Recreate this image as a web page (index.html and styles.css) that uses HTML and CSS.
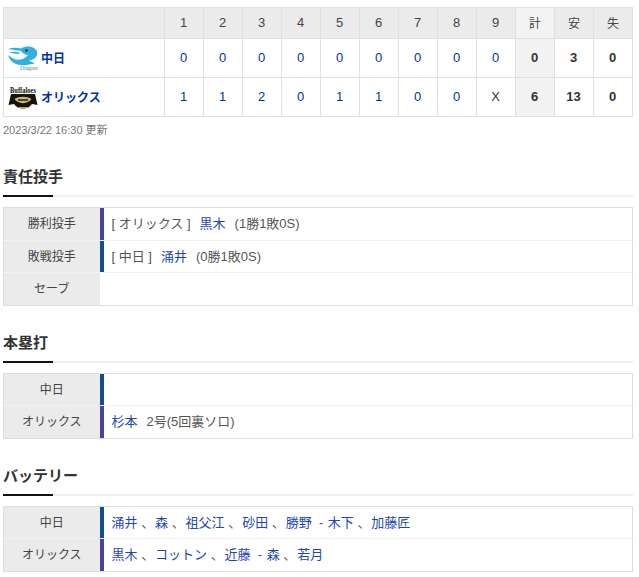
FILE: index.html
```html
<!DOCTYPE html>
<html lang="ja">
<head>
<meta charset="utf-8">
<title>試合結果</title>
<link rel="stylesheet" href="styles.css">
</head>
<body>
<table class="score">
<colgroup><col class="c-team"><col span="12" class="c-num"></colgroup>
<thead>
<tr><th></th><th>1</th><th>2</th><th>3</th><th>4</th><th>5</th><th>6</th><th>7</th><th>8</th><th>9</th><th class="total-head kanji">計</th><th class="kanji">安</th><th class="kanji">失</th></tr>
</thead>
<tbody>
<tr>
<td class="team"><div class="team-in"><svg class="logo" viewBox="0 0 30 28"><path d="M0 5C4 3.600 9 3.500 13 4.500 17 2 22 2 25 3.500 28.500 5 30 8 29 11 28 14 25 16 21 16.500L27 19.500C21 21 11 22 7 19.500 3 17.500 .5 14 .5 11 4 15 9 16.500 13 15.500 16 14.500 18 13 20 11 17 11 14 9 13 7 9 6 4 6 0 5Z" fill="#2fb2e3"/><path d="M1 8.500C5 7.500 9 7.500 12 9L11 10C7 9.500 4 9.500 1 8.500Z" fill="#2fb2e3"/><circle cx="18.500" cy="6.500" r="1.300" fill="#13242f"/><text class="logo-script" x="12" y="26">Dragons</text></svg><a href="#">中日</a></div></td>
<td><a href="#">0</a></td><td><a href="#">0</a></td><td><a href="#">0</a></td><td><a href="#">0</a></td><td><a href="#">0</a></td><td><a href="#">0</a></td><td><a href="#">0</a></td><td><a href="#">0</a></td><td><a href="#">0</a></td><td class="total">0</td><td class="plain">3</td><td class="plain">0</td>
</tr>
<tr>
<td class="team"><div class="team-in"><svg class="logo" viewBox="0 0 30 28"><path d="M3 11H27L29.500 22 24 21C20 27 10 27 6 21L.5 22Z" fill="#15130c"/><path d="M6.500 16C11 13 19 13 23.500 16 20 21.500 10 21.500 6.500 16Z" fill="#cdb777"/><path d="M10 17H20" stroke="#15130c" stroke-width="1.400"/><path d="M9 24.500H21" stroke="#b79f5e"/><text class="logo-serif" transform="translate(2 10) scale(1 1.400)">Buffaloes</text></svg><a href="#">オリックス</a></div></td>
<td><a href="#">1</a></td><td><a href="#">1</a></td><td><a href="#">2</a></td><td><a href="#">0</a></td><td><a href="#">1</a></td><td><a href="#">1</a></td><td><a href="#">0</a></td><td><a href="#">0</a></td><td class="plain">X</td><td class="total">6</td><td class="plain">13</td><td class="plain">0</td>
</tr>
</tbody>
</table>
<p class="updated">2023/3/22 16:30 更新</p>

<h2 class="heading">責任投手</h2>
<table class="info">
<tr><th>勝利投手</th><td class="bs">[ オリックス ]<a href="#">黒木</a><span class="note">(1勝1敗0S)</span></td></tr>
<tr><th>敗戦投手</th><td class="d">[ 中日 ]<a href="#">涌井</a><span class="note">(0勝1敗0S)</span></td></tr>
<tr><th>セーブ</th><td></td></tr>
</table>

<h2 class="heading">本塁打</h2>
<table class="info">
<tr><th>中日</th><td class="d"></td></tr>
<tr><th>オリックス</th><td class="bs"><a class="first" href="#">杉本</a><span class="note">2号(5回裏ソロ)</span></td></tr>
</table>

<h2 class="heading">バッテリー</h2>
<table class="info">
<tr><th>中日</th><td class="d"><a class="first" href="#">涌井</a> <span class="sep">、</span><a href="#" class="first">森</a> <span class="sep">、</span><a href="#" class="first">祖父江</a> <span class="sep">、</span><a href="#" class="first">砂田</a> <span class="sep">、</span><a href="#" class="first">勝野</a> &nbsp;<span class="sep">-</span> <a href="#" class="first">木下</a> <span class="sep">、</span><a href="#" class="first">加藤匠</a></td></tr>
<tr><th>オリックス</th><td class="bs"><a class="first" href="#">黒木</a> <span class="sep">、</span><a href="#" class="first">コットン</a> <span class="sep">、</span><a href="#" class="first">近藤</a> &nbsp;<span class="sep">-</span> <a href="#" class="first">森</a> <span class="sep">、</span><a href="#" class="first">若月</a></td></tr>
</table>
</body>
</html>
```
FILE: styles.css
```css
* { box-sizing: border-box; }
html, body { margin: 0; }
body {
  padding: 7px 6px 0 3px;
  background: #fff;
  color: #333;
  font-family: "Liberation Sans", "Noto Sans CJK JP", sans-serif;
  font-size: 12px;
}
a { color: #0033aa; text-decoration: none; }
table { border-collapse: collapse; width: 630px; table-layout: fixed; }

.score { width: 629px; border: 1px solid #ddd; }
.c-team { width: 161px; }
.c-num { width: 39px; }
.score th, .score td { border: 1px solid #e0e0e0; text-align: center; padding: 0 1px 1px 0; font-size: 13px; }
.score thead th { height: 31px; background: #ebebeb; font-weight: normal; color: #444; }
.score thead .kanji { font-size: 12px; padding-right: 0; }
.score tbody td { height: 39px; }
.score thead .total-head { background: #f3f3f3; }
.score tbody .total { background: #f2f2f2; font-weight: bold; color: #333; }
.score .plain { color: #333; font-weight: normal; }
.score tbody td:nth-last-child(-n+2) { font-weight: bold; }
.score tbody td.team { text-align: left; padding-left: 4px; }
.team-in { display: flex; align-items: center; gap: 3px; }
.team-in a { font-weight: bold; font-size: 12px; }
.logo { width: 30px; height: 28px; flex: none; }
.logo-script { font-family: "Liberation Serif", serif; font-style: italic; font-size: 5.500px; fill: #3c7f9a; }
.logo-serif { font-family: "Liberation Serif", serif; font-weight: bold; font-size: 6.500px; fill: #15130c; }

.updated { margin: 7px 0 0; padding-bottom: 3px; font-size: 11px; line-height: 13px; color: #777; }

.heading {
  position: relative;
  margin: 27px 0 10px;
  height: 30px;
  padding-left: 0;
  border-bottom: 2px solid #eee;
  font-size: 15px;
  line-height: 20px;
  color: #333;
}
.heading::after {
  content: "";
  position: absolute;
  left: 0;
  bottom: -2px;
  width: 50px;
  height: 2px;
  background: #111;
}

.info { border: 1px solid #ddd; }
.info th, .info td { height: 32.500px; border-top: 1px solid #f2f2f2; padding: 0 0 2px; font-size: 13px; font-weight: normal; }
.info tr:first-child th, .info tr:first-child td { border-top: 0; }
.info th { width: 96px; background: #ebebeb; text-align: center; color: #444; font-size: 12px; }
.info td { padding-left: 12px; color: #555; white-space: nowrap; }
.info td.bs { box-shadow: inset 4px 0 0 #46459a; }
.info td.d { box-shadow: inset 4px 0 0 #0f4f8f; }
.info td a { margin-left: 9px; color: #1f47b0; }
.info td a.first { margin-left: 0; }
.note { margin-left: 9px; }
.info td .note:first-child { margin-left: 0; }
.sep { margin-right: 0.900px; }
```
